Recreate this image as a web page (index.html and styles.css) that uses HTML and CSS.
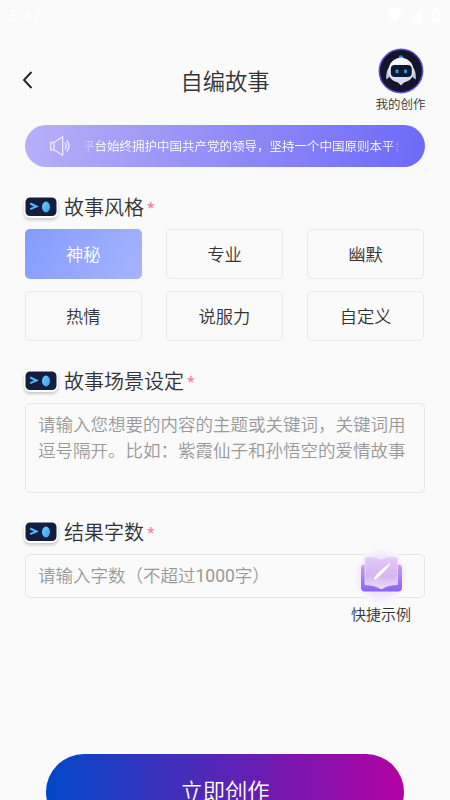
FILE: index.html
```
<!DOCTYPE html>
<html lang="zh-CN">
<head>
<meta charset="utf-8">
<title>自编故事</title>
<link rel="stylesheet" href="styles.css">
</head>
<body>
<svg class="defs" width="0" height="0" aria-hidden="true">
  <defs>
    <linearGradient id="eye" x1="0" y1="0" x2="1" y2="1"><stop offset="0" stop-color="#6ad0fb"/><stop offset="1" stop-color="#3a9bf4"/></linearGradient>
    <symbol id="bot" viewBox="0 0 34 22">
      <rect x="0" y="0" width="34" height="22" rx="6" fill="#fff"/>
      <rect x="1.5" y="1.5" width="31" height="18.6" rx="4.5" fill="#121d3f"/>
      <path d="M6.2 7.500L12.500 10.500L6.2 13.100" fill="none" stroke="#55b9f5" stroke-width="2"/>
      <ellipse cx="22" cy="11" rx="4" ry="5.4" fill="url(#eye)"/>
    </symbol>
  </defs>
</svg>
<main class="screen">
  <div class="status">
    <span>5:47</span>
    <svg width="56" height="18" viewBox="0 0 56 18" fill="#fff">
      <path d="M0 4Q10-3 20 4L10 16Z"/><path d="M37 1V16H23Z"/><path fill-rule="evenodd" d="M49 1h4v1h2v14H47V2h2ZM52 4l-3 5h2v5l3-6h-2Z"/>
    </svg>
  </div>
  <header class="header">
    <svg class="back" width="12" height="20" viewBox="0 0 12 20"><path d="M10.500 2L3 10L10.500 18" fill="none" stroke="#222" stroke-width="1.9"/></svg>
    <h1>自编故事</h1>
    <div class="mine">
      <svg width="46" height="46" viewBox="0 0 46 46">
        <defs>
          <linearGradient id="ring" x1="0" y1="0" x2="1" y2="1"><stop offset="0" stop-color="#6d65ee"/><stop offset=".5" stop-color="#403bb5"/><stop offset="1" stop-color="#7573f5"/></linearGradient>
          <linearGradient id="shell" x1="0" y1="0" x2="0" y2="1"><stop offset="0" stop-color="#fff"/><stop offset="1" stop-color="#cbd6ed"/></linearGradient>
        </defs>
        <circle cx="23" cy="23" r="21.7" fill="#15142c" stroke="url(#ring)" stroke-width="1.5"/>
        <circle cx="23" cy="9.500" r="2.3" fill="#168ccc"/>
        <path d="M12 18Q7.500 23 8.200 31.500Q13 29 14 23ZM34 18Q38.500 23 37.800 31.500Q33 29 32 23Z" fill="#bdc9e2"/>
        <path d="M23 9.500C16 10 10.500 15 10.500 23C10.500 30 14 33 20 34.500L23 37.500L26 34.500C32 33 35.500 30 35.500 23C35.500 15 30 10 23 9.500Z" fill="url(#shell)"/>
        <rect x="12.800" y="17" width="21" height="12" rx="4" fill="#10182f"/>
        <rect x="17.500" y="21.500" width="3" height="3.700" rx="1" fill="#2d9ce8"/>
        <rect x="26" y="21.500" width="3" height="3.700" rx="1" fill="#2d9ce8"/>
      </svg>
      <span>我的创作</span>
    </div>
  </header>

  <div class="notice">
    <svg width="22" height="22" viewBox="0 0 22 22" fill="none" stroke="#eeebff" stroke-width="1.3" stroke-linejoin="round" stroke-linecap="round">
      <path d="M1.700 7.500H5V14.800H1.700ZM5 7.500L13.700 1.800V20.200L5 14.800M16.300 8.300Q18 11 16.300 13.800M18 6Q22 11 18 16.200"/>
    </svg>
    <div class="ticker">平台始终拥护中国共产党的领导，坚持一个中国原则本平台</div>
  </div>

  <section class="style">
    <h2><svg class="bot"><use href="#bot"/></svg>故事风格<i>*</i></h2>
    <div class="options">
      <button class="option active">神秘</button>
      <button class="option">专业</button>
      <button class="option">幽默</button>
      <button class="option">热情</button>
      <button class="option">说服力</button>
      <button class="option">自定义</button>
    </div>
  </section>

  <section class="scene">
    <h2><svg class="bot"><use href="#bot"/></svg>故事场景设定<i>*</i></h2>
    <div class="field area">请输入您想要的内容的主题或关键词，关键词用逗号隔开。比如：紫霞仙子和孙悟空的爱情故事</div>
  </section>

  <section class="count">
    <h2><svg class="bot"><use href="#bot"/></svg>结果字数<i>*</i></h2>
    <div class="field line">请输入字数（不超过1000字）</div>
  </section>

  <button class="submit">立即创作</button>

  <div class="example">
    <svg width="60" height="56" viewBox="0 0 60 56">
      <defs>
        <radialGradient id="halo"><stop offset=".7" stop-color="#f2e6ff"/><stop offset="1" stop-color="#faf5ff"/></radialGradient>
        <linearGradient id="cover" x1="0" y1="0" x2="0" y2="1"><stop offset="0" stop-color="#cf9eea"/><stop offset="1" stop-color="#8763f7"/></linearGradient>
        <linearGradient id="page" x1="0" y1="0" x2="0" y2="1"><stop offset="0" stop-color="#e3caf7"/><stop offset=".6" stop-color="#d5b5f0"/><stop offset="1" stop-color="#efdcfb"/></linearGradient>
      </defs>
      <ellipse cx="30" cy="28" rx="26" ry="27" fill="url(#halo)"/>
      <rect x="10" y="16.500" width="41" height="27" rx="4" fill="url(#cover)"/>
      <path d="M14 9.500Q23 7.500 30 11.500Q38 7.500 46.500 9.500V36.500Q37 36.500 30.500 41Q23 36.500 14 36.500Z" fill="url(#page)" stroke="#eddcfa" stroke-width=".8"/>
      <path d="M23.500 30Q25 26 39 15.500Q37 20 25.500 30.500Q23 32 23.500 30Z" fill="#fff" stroke="#fff" stroke-width="1"/>
    </svg>
    <span>快捷示例</span>
  </div>
</main>
</body>
</html>
```
FILE: styles.css
```
* { box-sizing: border-box; }
body {
  margin: 0;
  background: #fafafa;
  color: #333;
  font-family: Roboto, "Noto Sans CJK SC DemiLight", "Noto Sans CJK SC", sans-serif;
  font-weight: 350;
}
h1, h2 { margin: 0; font-weight: inherit; }
button { font: inherit; color: inherit; padding: 0; }
.defs { position: absolute; }
.screen {
  position: relative;
  width: 450px;
  height: 800px;
  overflow: hidden;
  padding: 0 25px;
  display: flex;
  flex-direction: column;
}
.status {
  display: flex;
  justify-content: space-between;
  align-items: center;
  height: 32px;
  margin: 0 -19px 0 -17px;
  padding-right: 6px;
  flex: none;
  color: #fff;
  font: 500 17px Roboto, sans-serif;
}
.status svg { margin-right: -3px; }
.header {
  display: grid;
  grid-template-columns: 60px 1fr 60px;
  align-items: center;
  height: 93px;
  flex: none;
}
.back { margin: 2px 0 0 -4px; }
h1 { text-align: center; font-size: 22.3px; line-height: 32px; margin-top: 7px; }
.mine {
  display: flex;
  flex-direction: column;
  align-items: center;
  width: 60px;
  margin-left: 5.500px;
  font-size: 12.5px;
  line-height: 18px;
}
.mine svg { flex: none; margin-top: 4px; }
.mine span { margin-top: 2px; }
.notice {
  display: flex;
  align-items: center;
  height: 42px;
  flex: none;
  padding-left: 24px;
  border-radius: 21px;
  background: linear-gradient(100deg, #b7b0f8, #6c69f8);
  color: #fff;
}
.ticker {
  width: 318px;
  margin: 2px 0 0 11px;
  overflow: hidden;
  white-space: nowrap;
  font-size: 12.5px;
  line-height: 20px;
  font-weight: 400;
  -webkit-mask-image: linear-gradient(90deg, transparent, #000 16px, #000 308px, transparent);
  mask-image: linear-gradient(90deg, transparent, #000 16px, #000 308px, transparent);
}
h2 {
  display: flex;
  align-items: center;
  height: 32px;
  padding-top: 2px;
  font-size: 20px;
  line-height: 30px;
}
h2 i { font: 14px/20px "Noto Sans", sans-serif; color: #f8719e; margin: 0 0 0 3px; }
.bot {
  width: 34px;
  height: 22px;
  margin: -2px 6px 0 -1px;
  overflow: visible;
  filter: drop-shadow(0 2px 1.5px rgba(0, 0, 0, .2));
}
.style { margin-top: 24px; }
.options {
  display: grid;
  grid-template-columns: repeat(3, 116.500px);
  grid-auto-rows: 50px;
  gap: 12.500px 24.700px;
  margin-top: 5.500px;
}
.option {
  border: 1.500px solid #e8e8e8;
  border-radius: 5px;
  padding-top: 2px;
  background: #fafafa;
  font-size: 17.300px;
  line-height: 26px;
}
.option.active {
  border: 0;
  color: #fff;
  background: linear-gradient(120deg, #849cff, #a6b4ff);
}
.scene { margin-top: 23.500px; }
.field {
  border: 1px solid #e5e5e5;
  border-radius: 5px;
  padding: 8px 12px;
  color: #999;
  font-size: 17.500px;
  line-height: 26px;
}
.area { height: 90px; margin-top: 6.500px; }
.count { margin-top: 22.500px; }
.line { height: 44px; margin-top: 6.500px; font-weight: 400; }
.submit {
  width: 358px;
  height: 76px;
  flex: none;
  margin: 155.500px auto 0;
  padding-bottom: 3px;
  border: 0;
  border-radius: 38px;
  background: linear-gradient(90deg, #0048c8, #b300a2);
  color: #fff;
  font-size: 22.300px;
}
.example {
  position: absolute;
  left: 341px;
  top: 548px;
  width: 80px;
  display: flex;
  flex-direction: column;
  align-items: center;
  font-size: 15px;
  line-height: 22px;
}
```
